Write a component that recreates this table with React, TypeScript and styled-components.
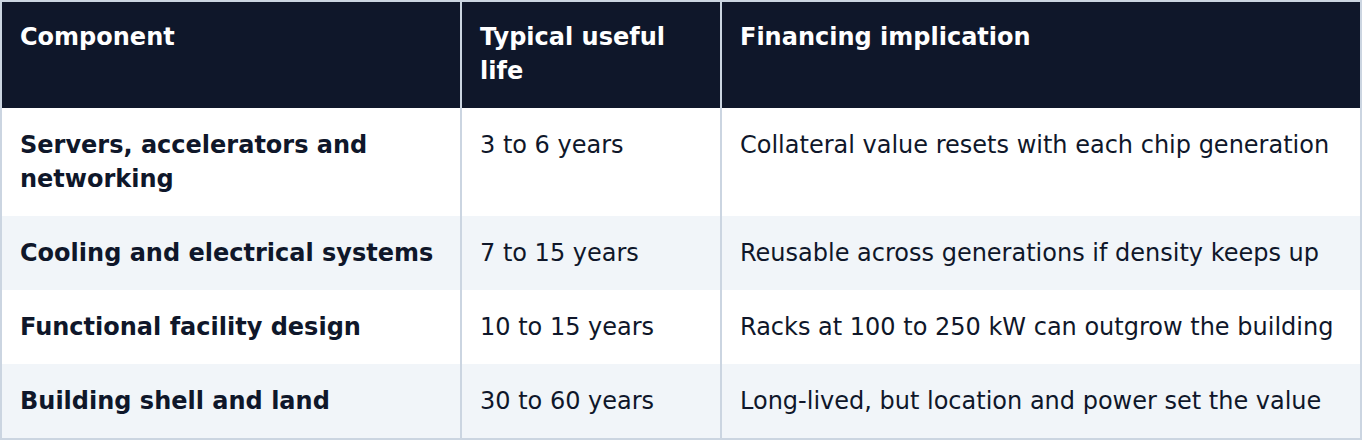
import React from "react";
import styled, { createGlobalStyle } from "styled-components";

const GlobalStyle = createGlobalStyle`
  * {
    box-sizing: border-box;
  }
  body {
    margin: 0;
    background: #ffffff;
    font-family: "DejaVu Sans", "Liberation Sans", sans-serif;
  }
`;

const Table = styled.div`
  width: 1362px;
  border: 2px solid #cbd5e1;
  background: #ffffff;
`;

const Row = styled.div<{ $variant: "head" | "plain" | "striped" }>`
  display: grid;
  grid-template-columns: 458px 260px 640px;
  background: ${(p) =>
    p.$variant === "head"
      ? "#0f172a"
      : p.$variant === "striped"
      ? "#f1f5f9"
      : "#ffffff"};
`;

const Cell = styled.div<{ $head?: boolean; $bold?: boolean; $first?: boolean }>`
  padding: ${(p) => (p.$head ? "18px 18px 20px" : "20px 18px 20px")};
  border-left: ${(p) => (p.$first ? "none" : "2px solid #cbd5e1")};
  font-size: 24px;
  line-height: 34px;
  font-weight: ${(p) => (p.$head || p.$bold ? 700 : 400)};
  color: ${(p) => (p.$head ? "#ffffff" : "#0f172a")};
`;

const headers = ["Component", "Typical useful life", "Financing implication"];

const rows = [
  {
    component: "Servers, accelerators and networking",
    life: "3 to 6 years",
    implication: "Collateral value resets with each chip generation",
  },
  {
    component: "Cooling and electrical systems",
    life: "7 to 15 years",
    implication: "Reusable across generations if density keeps up",
  },
  {
    component: "Functional facility design",
    life: "10 to 15 years",
    implication: "Racks at 100 to 250 kW can outgrow the building",
  },
  {
    component: "Building shell and land",
    life: "30 to 60 years",
    implication: "Long-lived, but location and power set the value",
  },
];

function App() {
  return (
    <>
      <GlobalStyle />
      <Table>
        <Row $variant="head">
          {headers.map((h, i) => (
            <Cell key={h} $head $first={i === 0}>
              {h}
            </Cell>
          ))}
        </Row>
        {rows.map((r, i) => (
          <Row key={r.component} $variant={i % 2 === 1 ? "striped" : "plain"}>
            <Cell $first $bold>
              {r.component}
            </Cell>
            <Cell>{r.life}</Cell>
            <Cell>{r.implication}</Cell>
          </Row>
        ))}
      </Table>
    </>
  );
}

export default App;
